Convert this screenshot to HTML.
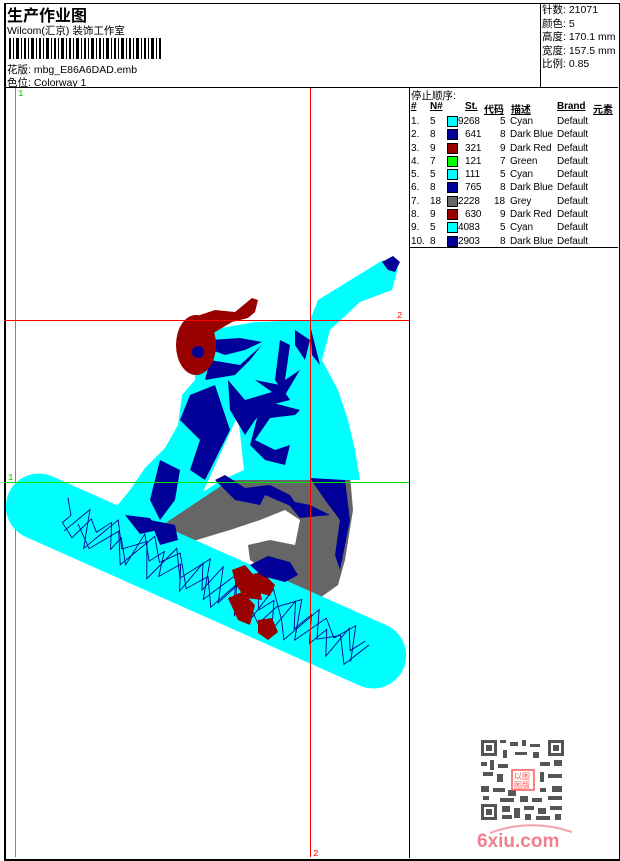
<!DOCTYPE html>
<html><head><meta charset="utf-8">
<style>
html,body{margin:0;padding:0;background:#fff;}
body{width:620px;height:860px;position:relative;overflow:hidden;font-family:"Liberation Sans","Noto Sans CJK SC",sans-serif;color:#000;}
.a{position:absolute;white-space:nowrap;}
.f11{font-size:10.5px;}
.box{position:absolute;border:1px solid #000;}
.t{font-size:10px;letter-spacing:-0.1px;}
</style></head><body>
<div class="box" style="left:4px;top:3px;width:613px;height:855px;border-width:1px 2px 2px 2px;"></div>
<div class="a" style="left:4px;top:87px;width:614px;height:1px;background:#000"></div>
<div class="a" style="left:540px;top:3px;width:1px;height:85px;background:#000"></div>
<div class="a" style="left:409px;top:87px;width:1px;height:771px;background:#000"></div>
<div class="a" style="left:409px;top:247px;width:209px;height:1px;background:#000"></div>

<div class="a" style="left:7px;top:2px;font-size:16px;font-weight:bold;">生产作业图</div>
<div class="a f11" style="left:7px;top:23px;">Wilcom(汇京) 装饰工作室</div>
<div class="a" style="left:9px;top:38px;width:152px;height:21px;background:repeating-linear-gradient(90deg,#000 0 2px,#fff 2px 4px,#000 4px 5px,#fff 5px 7px,#000 7px 10px,#fff 10px 12px,#000 12px 13px,#fff 13px 15px);"></div>
<div class="a f11" style="left:7px;top:62px;">花版: mbg_E86A6DAD.emb</div>
<div class="a f11" style="left:7px;top:75px;">色位: Colorway 1</div>

<div class="a f11" style="left:542px;top:4px;line-height:13.5px;">针数: 21071<br>颜色: 5<br>高度: 170.1 mm<br>宽度: 157.5 mm<br>比例: 0.85</div>

<div class="a f11" style="left:411px;top:88px;">停止顺序:</div>
<div class="a t" style="left:411px;top:101px;font-weight:bold;text-decoration:underline;">#</div>
<div class="a t" style="left:430px;top:101px;font-weight:bold;text-decoration:underline;">N#</div>
<div class="a t" style="left:465px;top:101px;font-weight:bold;text-decoration:underline;">St.</div>
<div class="a t" style="left:484px;top:101px;font-weight:bold;text-decoration:underline;">代码</div>
<div class="a t" style="left:511px;top:101px;font-weight:bold;text-decoration:underline;">描述</div>
<div class="a t" style="left:557px;top:101px;font-weight:bold;text-decoration:underline;">Brand</div>
<div class="a t" style="left:593px;top:101px;font-weight:bold;text-decoration:underline;">元素</div>

<div class="a t" style="left:411px;top:115px;line-height:13.3px;">
<div style="position:relative;height:13.3px"><span class="a" style="left:0">1.</span><span class="a" style="left:19px">5</span><span class="a" style="left:36px;top:1px;width:9px;height:9px;background:#00ffff;border:1px solid #000"></span><span class="a" style="left:47px">9268</span><span class="a" style="left:89px">5</span><span class="a" style="left:99px">Cyan</span><span class="a" style="left:146px">Default</span></div>
<div style="position:relative;height:13.3px"><span class="a" style="left:0">2.</span><span class="a" style="left:19px">8</span><span class="a" style="left:36px;top:1px;width:9px;height:9px;background:#000099;border:1px solid #000"></span><span class="a" style="left:54px">641</span><span class="a" style="left:89px">8</span><span class="a" style="left:99px">Dark Blue</span><span class="a" style="left:146px">Default</span></div>
<div style="position:relative;height:13.3px"><span class="a" style="left:0">3.</span><span class="a" style="left:19px">9</span><span class="a" style="left:36px;top:1px;width:9px;height:9px;background:#990000;border:1px solid #000"></span><span class="a" style="left:54px">321</span><span class="a" style="left:89px">9</span><span class="a" style="left:99px">Dark Red</span><span class="a" style="left:146px">Default</span></div>
<div style="position:relative;height:13.3px"><span class="a" style="left:0">4.</span><span class="a" style="left:19px">7</span><span class="a" style="left:36px;top:1px;width:9px;height:9px;background:#00ff00;border:1px solid #000"></span><span class="a" style="left:54px">121</span><span class="a" style="left:89px">7</span><span class="a" style="left:99px">Green</span><span class="a" style="left:146px">Default</span></div>
<div style="position:relative;height:13.3px"><span class="a" style="left:0">5.</span><span class="a" style="left:19px">5</span><span class="a" style="left:36px;top:1px;width:9px;height:9px;background:#00ffff;border:1px solid #000"></span><span class="a" style="left:54px">111</span><span class="a" style="left:89px">5</span><span class="a" style="left:99px">Cyan</span><span class="a" style="left:146px">Default</span></div>
<div style="position:relative;height:13.3px"><span class="a" style="left:0">6.</span><span class="a" style="left:19px">8</span><span class="a" style="left:36px;top:1px;width:9px;height:9px;background:#000099;border:1px solid #000"></span><span class="a" style="left:54px">765</span><span class="a" style="left:89px">8</span><span class="a" style="left:99px">Dark Blue</span><span class="a" style="left:146px">Default</span></div>
<div style="position:relative;height:13.3px"><span class="a" style="left:0">7.</span><span class="a" style="left:19px">18</span><span class="a" style="left:36px;top:1px;width:9px;height:9px;background:#666;border:1px solid #000"></span><span class="a" style="left:47px">2228</span><span class="a" style="left:83px">18</span><span class="a" style="left:99px">Grey</span><span class="a" style="left:146px">Default</span></div>
<div style="position:relative;height:13.3px"><span class="a" style="left:0">8.</span><span class="a" style="left:19px">9</span><span class="a" style="left:36px;top:1px;width:9px;height:9px;background:#990000;border:1px solid #000"></span><span class="a" style="left:54px">630</span><span class="a" style="left:89px">9</span><span class="a" style="left:99px">Dark Red</span><span class="a" style="left:146px">Default</span></div>
<div style="position:relative;height:13.3px"><span class="a" style="left:0">9.</span><span class="a" style="left:19px">5</span><span class="a" style="left:36px;top:1px;width:9px;height:9px;background:#00ffff;border:1px solid #000"></span><span class="a" style="left:47px">4083</span><span class="a" style="left:89px">5</span><span class="a" style="left:99px">Cyan</span><span class="a" style="left:146px">Default</span></div>
<div style="position:relative;height:13.3px"><span class="a" style="left:0">10.</span><span class="a" style="left:19px">8</span><span class="a" style="left:36px;top:1px;width:9px;height:9px;background:#000099;border:1px solid #000"></span><span class="a" style="left:47px">2903</span><span class="a" style="left:89px">8</span><span class="a" style="left:99px">Dark Blue</span><span class="a" style="left:146px">Default</span></div>
</div>

<svg class="a" style="left:0;top:0" width="620" height="860" viewBox="0 0 620 860">
<line x1="15.5" y1="88" x2="15.5" y2="857" stroke="#00e000" stroke-width="1"/>
<text x="18" y="96" font-size="9" fill="#00c000" font-family="Liberation Mono">1</text>
<polygon fill="#666" points="158,530 215,478 350,475 353,510 345,560 338,585 310,605 295,590 250,560 248,545 270,540 295,545 300,520 285,510 260,520 230,530 180,545"/>
<polygon fill="#00ffff" points="210,330 255,322 310,320 318,300 383,260 398,268 392,290 360,302 330,330 322,360 338,390 348,420 355,450 360,480 230,480 200,500 170,520 150,535 120,530 112,512 130,490 145,468 165,448 178,425 182,395 195,380 195,355"/>
<polygon fill="#fff" points="238,415 244,470 222,480 203,492"/>
<g fill="#000099">
<polygon points="210,340 240,338 262,342 245,350 225,355 212,350"/>
<polygon points="210,360 240,365 262,345 250,360 235,375 205,380"/>
<polygon points="228,380 245,400 272,392 255,380 280,385 290,400 270,405 255,420 245,435 230,410"/>
<polygon points="262,400 300,410 295,415 270,418 255,440 275,450 290,445 285,465 265,460 250,445"/>
<polygon points="280,340 290,345 285,380 300,370 285,395 275,380"/>
<polygon points="295,330 310,340 305,360 295,345"/>
<polygon points="310,325 320,365 312,355"/>
<polygon points="190,395 215,385 230,430 205,480 190,470 200,440 180,420"/>
<polygon points="160,460 180,470 175,500 160,520 150,500"/>
<polygon points="215,480 235,500 260,505 265,495 300,510 290,495 270,485 245,488 225,475"/>
<polygon points="310,478 345,480 350,520 340,570 335,555 340,520 325,500"/>
<polygon points="285,500 310,505 330,515 300,518"/>
<polygon points="382,262 393,256 400,262 395,272 388,270"/>
</g>
<g fill="#990000">
<ellipse cx="196" cy="345" rx="20" ry="30"/>
<polygon points="185,320 215,310 235,312 252,298 258,300 255,312 248,318 232,322 205,338"/>
</g>
<ellipse cx="198" cy="352" rx="6" ry="6" fill="#000099"/>
<g transform="translate(206,581) rotate(24)">
<rect x="-216" y="-33" width="432" height="66" rx="33" fill="#00ffff"/>
<g fill="none" stroke="#000099" stroke-width="0.9">
<polyline points="-160,-20 -150,-5 -155,5 -140,15 -130,-10 -120,0 -110,-15 -100,10 -95,-5 -80,18 -75,-18 -60,5 -50,-10 -45,15 -30,-5 -20,20 -10,-15 0,10 10,-20 20,15 30,-8 40,20 50,-15 60,5 70,-10 80,18 90,-18 100,8 110,-12 120,15 130,-5 140,20 150,-15 160,5 170,-10"/>
<polyline points="-150,12 -135,-18 -125,20 -105,-20 -90,5 -70,-12 -55,22 -40,-18 -25,8 -5,-22 5,18 25,-18 35,10 55,22 65,-20 85,5 95,22 115,-20 125,8 145,-5 160,20 175,-8"/>
<polyline points="-140,0 -120,18 -100,-10 -85,20 -65,-20 -50,2 -35,-15 -15,15 0,-5 15,22 35,-22 45,0 65,18 75,-5 95,-22 105,18 125,-15 140,0 155,-20 165,15"/>
</g>
</g>
<g fill="#990000">
<polygon points="232,570 245,565 258,580 262,600 245,598 236,585"/>
<polygon points="228,598 242,592 255,605 250,625 238,620"/>
<polygon points="258,620 272,618 278,632 268,640 258,633"/>
<polygon points="248,575 262,572 275,585 270,596 256,592"/>
</g>
<polygon fill="#000099" points="250,565 268,556 290,562 298,575 285,582 262,576"/>
<polygon fill="#000099" points="125,515 150,518 158,530 140,534"/>
<polygon fill="#000099" points="150,520 175,525 178,540 160,545"/>
<line x1="4" y1="320.5" x2="409" y2="320.5" stroke="#ff0000"/>
<text x="397" y="318" font-size="9" fill="#ff0000" font-family="Liberation Mono">2</text>
<line x1="4" y1="482.5" x2="409" y2="482.5" stroke="#00e000"/>
<text x="8" y="480" font-size="9" fill="#00c000" font-family="Liberation Mono">1</text>
<line x1="310.5" y1="88" x2="310.5" y2="857" stroke="#ff0000"/>
<text x="313" y="856" font-size="9" fill="#ff0000" font-family="Liberation Mono">2</text>
<g fill="#555">
<rect x="481" y="740" width="16" height="16"/><rect x="484" y="743" width="10" height="10" fill="#fff"/><rect x="486" y="745" width="6" height="6"/>
<rect x="548" y="740" width="16" height="16"/><rect x="551" y="743" width="10" height="10" fill="#fff"/><rect x="553" y="745" width="6" height="6"/>
<rect x="481" y="804" width="16" height="16"/><rect x="484" y="807" width="10" height="10" fill="#fff"/><rect x="486" y="809" width="6" height="6"/>
<rect x="500" y="740" width="6" height="3"/><rect x="510" y="742" width="8" height="4"/><rect x="522" y="740" width="4" height="6"/><rect x="530" y="744" width="10" height="3"/><rect x="503" y="750" width="4" height="8"/><rect x="515" y="752" width="12" height="3"/><rect x="533" y="752" width="6" height="6"/>
<rect x="481" y="762" width="6" height="4"/><rect x="490" y="760" width="4" height="10"/><rect x="498" y="764" width="10" height="4"/><rect x="540" y="762" width="10" height="4"/><rect x="554" y="760" width="8" height="6"/>
<rect x="483" y="772" width="10" height="4"/><rect x="497" y="774" width="6" height="8"/><rect x="540" y="772" width="4" height="10"/><rect x="548" y="774" width="14" height="4"/>
<rect x="481" y="786" width="8" height="6"/><rect x="493" y="788" width="12" height="4"/><rect x="508" y="790" width="8" height="6"/><rect x="540" y="788" width="6" height="4"/><rect x="552" y="786" width="10" height="6"/>
<rect x="483" y="796" width="6" height="4"/><rect x="500" y="798" width="14" height="4"/><rect x="520" y="796" width="8" height="6"/><rect x="532" y="798" width="10" height="4"/><rect x="548" y="796" width="14" height="4"/>
<rect x="502" y="806" width="8" height="6"/><rect x="514" y="808" width="6" height="10"/><rect x="524" y="806" width="10" height="4"/><rect x="538" y="808" width="8" height="6"/><rect x="550" y="806" width="12" height="4"/>
<rect x="502" y="815" width="10" height="4"/><rect x="525" y="814" width="6" height="6"/><rect x="536" y="816" width="14" height="4"/><rect x="555" y="814" width="6" height="6"/>
</g>
<rect x="512" y="770" width="22" height="20" fill="#fff" stroke="#f55" stroke-width="1.5"/>
<text x="514" y="779" font-size="8" fill="#f55" font-family="Noto Sans CJK SC">以图</text>
<text x="514" y="788" font-size="8" fill="#f55" font-family="Noto Sans CJK SC">图版</text>
<path d="M490 833 Q530 818 572 832" stroke="#f4a0a8" stroke-width="2" fill="none"/>
<text x="477" y="847" font-size="19" font-weight="bold" fill="#f2808c" font-family="Liberation Sans">6xiu.com</text>
</svg>
</body></html>
